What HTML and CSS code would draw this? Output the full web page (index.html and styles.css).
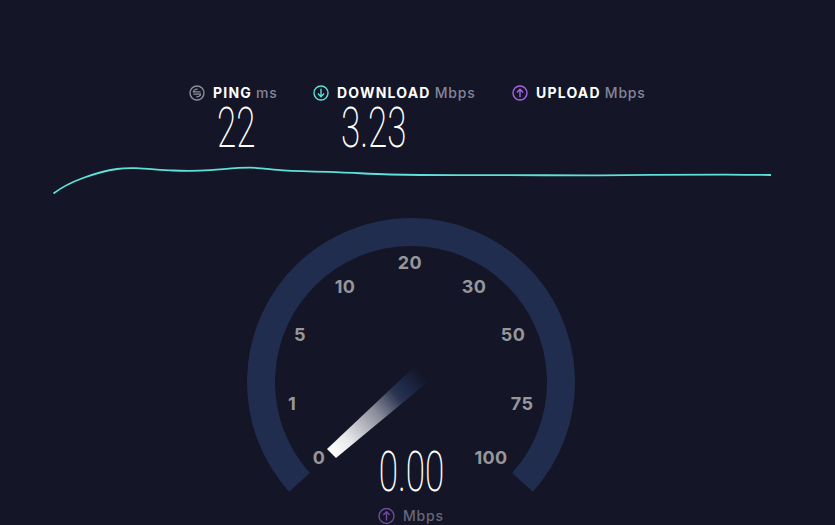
FILE: index.html
```html
<!DOCTYPE html>
<html lang="en">
<head>
<meta charset="utf-8">
<title>Speed test</title>
<link rel="stylesheet" href="styles.css">
</head>
<body>
<main class="page">
  <section class="metrics">
    <div class="metric metric-ping">
      <div class="metric-head">
        <svg class="icon" viewBox="0 0 16 16"><circle cx="8" cy="8" r="7" fill="none" stroke="#8d8e99" stroke-width="1.4"/><path d="M11.6 6.900H4.400C4.600 4.900 6.800 3.900 8.600 4.300M4.400 9.100H11.600C11.400 11.100 9.200 12.100 7.400 11.700" fill="none" stroke="#8d8e99" stroke-width="1.3"/></svg>
        <span class="metric-name">PING</span><span class="metric-unit">ms</span>
      </div>
      <div class="metric-value">22</div>
    </div>
    <div class="metric metric-down">
      <div class="metric-head">
        <svg class="icon" viewBox="0 0 16 16"><circle cx="8" cy="8" r="7" fill="none" stroke="#5fe0d5" stroke-width="1.4"/><path d="M8 3.800V11.600M4.900 8.600L8 11.700L11.100 8.600" fill="none" stroke="#5fe0d5" stroke-width="1.4"/></svg>
        <span class="metric-name">DOWNLOAD</span><span class="metric-unit">Mbps</span>
      </div>
      <div class="metric-value">3.23</div>
    </div>
    <div class="metric">
      <div class="metric-head">
        <svg class="icon" viewBox="0 0 16 16"><circle cx="8" cy="8" r="7" fill="none" stroke="#a566e6" stroke-width="1.4"/><path d="M8 12.200V4.400M4.900 7.400L8 4.300L11.100 7.400" fill="none" stroke="#a566e6" stroke-width="1.4"/></svg>
        <span class="metric-name">UPLOAD</span><span class="metric-unit">Mbps</span>
      </div>
    </div>
  </section>

  <svg class="chart" viewBox="0 160 835 40">
    <path class="chart-line" d="M53.500 193.500C62 187 72 182 83 178C94 174 106 170.500 117 169C124 168 130 168 136 168.200C148 168.600 160 170 173 170.500C182 170.900 191 170.900 200 170.700C218 170.200 234 167.600 250 167.700C262 167.800 272 169.700 283 170.300C302 171.300 320 171.700 340 172.300C356 172.900 372 174 390 174.500C420 175.200 450 175.200 480 175.100C520 174.900 560 175.500 600 175.400C640 174.800 690 174.600 725 174.600C745 174.600 758 175 771 175"/>
  </svg>

  <svg class="gauge" viewBox="0 210 835 315">
    <defs>
      <linearGradient id="needle-fade" gradientUnits="userSpaceOnUse" x1="331" y1="453" x2="423" y2="374">
        <stop offset="0" stop-color="#ffffff"/>
        <stop offset="0.18" stop-color="#e8e8ec"/>
        <stop offset="0.5" stop-color="#8a8c9a"/>
        <stop offset="0.72" stop-color="#2a3350"/>
        <stop offset="0.8" stop-color="#1f2b4c"/>
        <stop offset="1" stop-color="#1f2b4c" stop-opacity="0"/>
      </linearGradient>
    </defs>
    <path class="gauge-arc" d="M299.500 482.400A150 150 0 1 1 522.500 482.400"/>
    <polygon points="327,449 336,458 429,381 416,365" fill="url(#needle-fade)"/>
    <g class="gauge-labels">
      <text x="319" y="463.500">0</text>
      <text x="292" y="409.500">1</text>
      <text x="300" y="340.500">5</text>
      <text x="345" y="292.500">10</text>
      <text x="410" y="268.500">20</text>
      <text x="474" y="292.500">30</text>
      <text x="513" y="340.500">50</text>
      <text x="522" y="409.500">75</text>
      <text x="491" y="463.500">100</text>
    </g>
    <text class="gauge-value" transform="translate(411.500 491) scale(0.625 1)">0.00</text>
    <circle cx="386.500" cy="516" r="7.500" fill="none" stroke="#6d4a9e" stroke-width="1.4"/>
    <path d="M386.500 520.500V512M383.300 515L386.500 511.800L389.700 515" fill="none" stroke="#6d4a9e" stroke-width="1.4"/>
    <text class="gauge-unit" x="403" y="521">Mbps</text>
  </svg>
</main>
</body>
</html>
```
FILE: styles.css
```css
html, body {
  margin: 0;
  padding: 0;
  background: #141526;
}

.page {
  width: 835px;
  height: 525px;
  overflow: hidden;
  display: flex;
  flex-direction: column;
  font-family: Inter, "Noto Sans", sans-serif;
}

.metrics {
  display: flex;
  align-items: flex-start;
  height: 75px;
  padding: 85px 0 0 189px;
}

.metric-ping { width: 124px; }
.metric-down { width: 199px; }

.metric-head {
  display: flex;
  align-items: center;
  height: 16px;
  font-size: 14px;
  line-height: 16px;
  white-space: nowrap;
}

.icon {
  width: 16px;
  height: 16px;
  margin-right: 8px;
  flex: none;
}

.metric-name {
  color: #ffffff;
  font-weight: 700;
  letter-spacing: 1.2px;
  margin-right: 4px;
}

.metric-unit {
  color: #83859a;
  font-weight: 500;
  letter-spacing: 0.8px;
}

.metric-value {
  margin: 2px 0 0 28px;
  color: #ffffff;
  font-family: Roboto, sans-serif;
  font-weight: 200;
  font-size: 56px;
  line-height: 50px;
  white-space: nowrap;
  transform: scaleX(0.625);
  transform-origin: left center;
}

.chart {
  display: block;
  width: 835px;
  height: 40px;
  flex: none;
}

.chart-line {
  fill: none;
  stroke: #5fe0d9;
  stroke-width: 1.8;
}

.gauge {
  display: block;
  width: 835px;
  height: 315px;
  margin-top: 10px;
  flex: none;
}

.gauge-arc {
  fill: none;
  stroke: #212d4e;
  stroke-width: 28;
}

.gauge-labels text {
  fill: #96979d;
  font-family: Inter, sans-serif;
  font-size: 18px;
  font-weight: 700;
  letter-spacing: 0.4px;
  text-anchor: middle;
}

.gauge-value {
  fill: #ffffff;
  font-family: Roboto, sans-serif;
  font-size: 56px;
  font-weight: 200;
  text-anchor: middle;
}

.gauge-unit {
  fill: #666879;
  font-family: Inter, sans-serif;
  font-size: 14px;
  font-weight: 500;
  letter-spacing: 0.8px;
}
```
